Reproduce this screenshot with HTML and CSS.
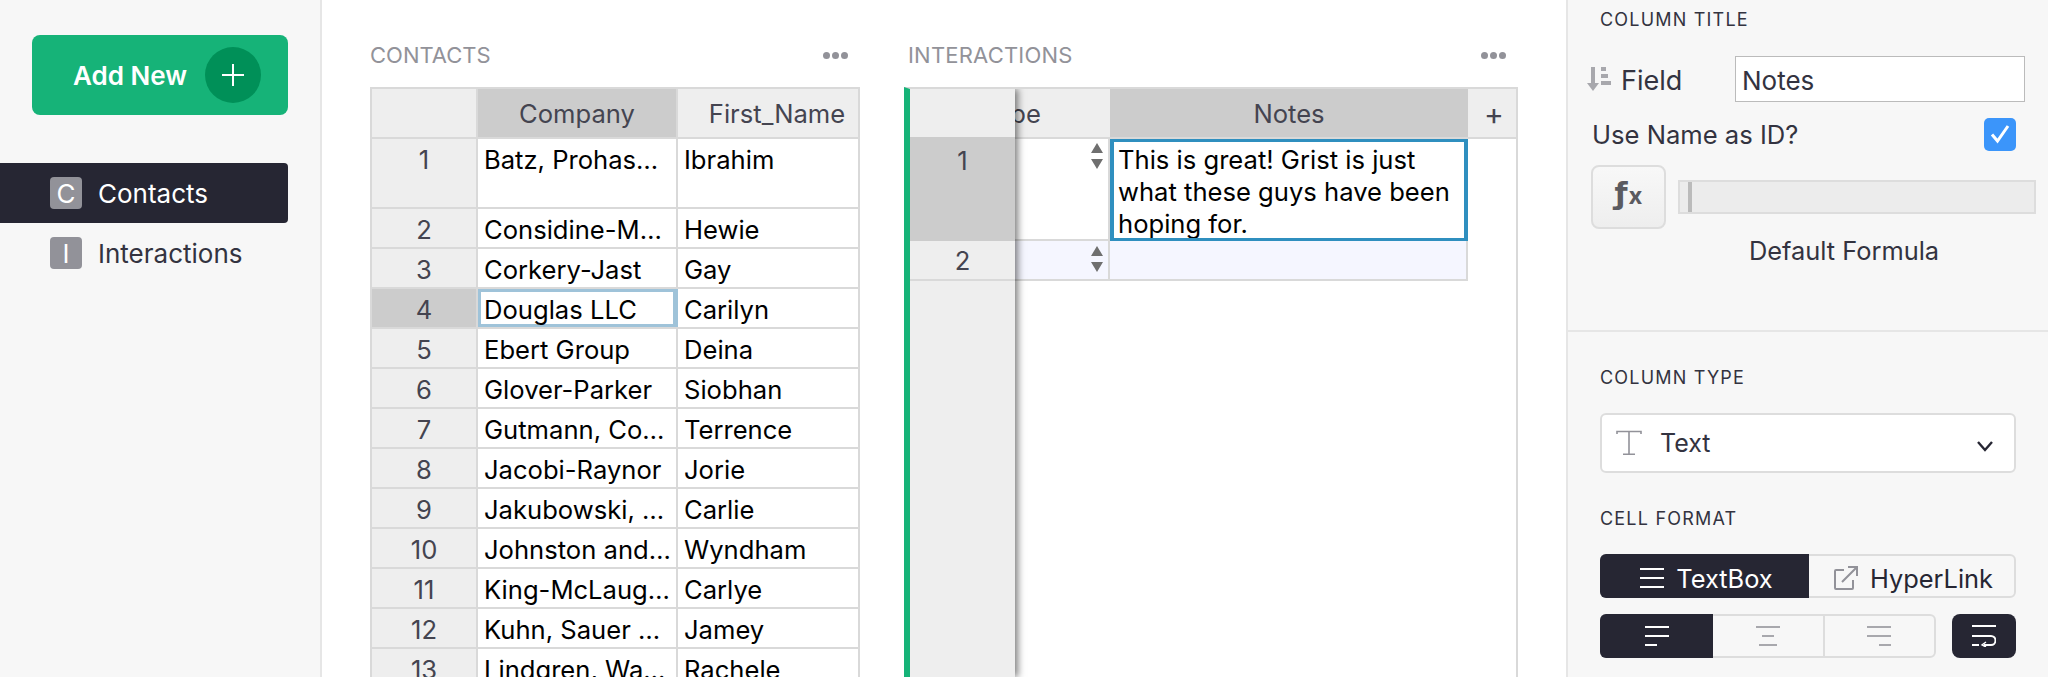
FILE: index.html
```html
<!DOCTYPE html>
<html lang="en">
<head>
    <meta charset="UTF-8">
    <meta name="viewport" content="width=device-width, initial-scale=1.0">
    <title>Grist</title>
    <link rel="stylesheet" href="styles.css">
</head>
<body>
    <div class="app">
        <!-- Left panel -->
        <aside class="left-panel">
            <button class="add-new">
                <span>Add New</span>
                <span class="add-circle">
                    <svg width="24" height="24" viewBox="0 0 24 24"><path d="M12 1v22M1 12h22" stroke="#fff" stroke-width="2" fill="none"/></svg>
                </span>
            </button>
            <ul class="page-list">
                <li class="page-item page-active"><span class="page-badge">C</span>Contacts</li>
                <li class="page-item"><span class="page-badge">I</span>Interactions</li>
            </ul>
        </aside>

        <!-- Widgets -->
        <main class="main">
            <section class="contacts">
                <div class="section-head">
                    <span class="section-title">CONTACTS</span>
                    <span class="dots"><i></i><i></i><i></i></span>
                </div>
                <div class="grid">
                    <div class="row row-head">
                        <div class="num"></div>
                        <div class="cell head-selected">Company</div>
                        <div class="cell head-first">First_Name</div>
                    </div>
                    <div class="row row-tall"><div class="num">1</div><div class="cell">Batz, Prohas…</div><div class="cell">Ibrahim</div></div>
                    <div class="row"><div class="num">2</div><div class="cell">Considine-M…</div><div class="cell">Hewie</div></div>
                    <div class="row"><div class="num">3</div><div class="cell">Corkery-Jast</div><div class="cell">Gay</div></div>
                    <div class="row"><div class="num num-selected">4</div><div class="cell cell-cursor">Douglas LLC</div><div class="cell">Carilyn</div></div>
                    <div class="row"><div class="num">5</div><div class="cell">Ebert Group</div><div class="cell">Deina</div></div>
                    <div class="row"><div class="num">6</div><div class="cell">Glover-Parker</div><div class="cell">Siobhan</div></div>
                    <div class="row"><div class="num">7</div><div class="cell">Gutmann, Co…</div><div class="cell">Terrence</div></div>
                    <div class="row"><div class="num">8</div><div class="cell">Jacobi-Raynor</div><div class="cell">Jorie</div></div>
                    <div class="row"><div class="num">9</div><div class="cell">Jakubowski, …</div><div class="cell">Carlie</div></div>
                    <div class="row"><div class="num">10</div><div class="cell">Johnston and…</div><div class="cell">Wyndham</div></div>
                    <div class="row"><div class="num">11</div><div class="cell">King-McLaug…</div><div class="cell">Carlye</div></div>
                    <div class="row"><div class="num">12</div><div class="cell">Kuhn, Sauer …</div><div class="cell">Jamey</div></div>
                    <div class="row"><div class="num">13</div><div class="cell">Lindgren, Wa…</div><div class="cell">Rachele</div></div>
                </div>
            </section>

            <section class="interactions">
                <div class="section-head">
                    <span class="section-title">INTERACTIONS</span>
                    <span class="dots"><i></i><i></i><i></i></span>
                </div>
                <div class="int-grid">
                    <div class="frozen">
                        <div class="frozen-head"></div>
                        <div class="frozen-one">1</div>
                        <div class="frozen-two">2</div>
                    </div>
                    <div class="scroller">
                        <div class="int-row int-head">
                            <div class="cell type-head">Type</div>
                            <div class="cell head-selected">Notes</div>
                            <div class="cell add-col">+</div>
                        </div>
                        <div class="int-row int-one">
                            <div class="cell type-cell">
                                <span class="spinner"><i class="up"></i><i class="down"></i></span>
                            </div>
                            <div class="cell notes-cursor">This is great! Grist is just what these guys have been hoping for.</div>
                        </div>
                        <div class="int-row int-two">
                            <div class="cell type-cell">
                                <span class="spinner"><i class="up"></i><i class="down"></i></span>
                            </div>
                            <div class="cell"></div>
                        </div>
                    </div>
                </div>
            </section>
        </main>

        <!-- Right panel -->
        <aside class="right-panel">
            <div class="panel-top">
                <div class="label label-first">COLUMN TITLE</div>
                <div class="field-row">
                    <svg class="sort-icon" width="24" height="24" viewBox="0 0 24 24" fill="#a8a8ad">
                        <path d="M4 0h4v16h4l-6 8-6-8h4z"/>
                        <rect x="14" y="0" width="5" height="4"/>
                        <rect x="14" y="7" width="7" height="4"/>
                        <rect x="14" y="14" width="10" height="4"/>
                    </svg>
                    <span class="field-label">Field</span>
                    <div class="field-input">Notes</div>
                </div>
                <div class="id-row">
                    <span>Use Name as ID?</span>
                    <span class="checkbox">
                        <svg width="22" height="22" viewBox="0 0 22 22"><path d="M3 11.5l5.5 6.5L19 3" stroke="#fff" stroke-width="3" fill="none"/></svg>
                    </span>
                </div>
                <div class="formula-row">
                    <div class="fx-btn"><span class="fx-f">ƒ</span><span class="fx-x">x</span></div>
                    <div class="formula-box"><i></i></div>
                </div>
                <div class="formula-caption">Default Formula</div>
            </div>

            <div class="panel-bottom">
                <div class="label">COLUMN TYPE</div>
                <div class="type-select">
                    <svg width="26" height="26" viewBox="0 0 26 26" fill="none" stroke="#929299" stroke-width="1.6">
                        <path d="M1 4V1.500h24V4M13 1.500v22M7 24.200h12"/>
                    </svg>
                    <span class="type-name">Text</span>
                    <svg class="chevron" width="18" height="12" viewBox="0 0 18 12" fill="none" stroke="#262633" stroke-width="2.4">
                        <path d="M2 2l7 8 7-8"/>
                    </svg>
                </div>
                <div class="label label-format">CELL FORMAT</div>
                <div class="btn-group format-group">
                    <div class="btn btn-dark">
                        <svg width="24" height="20" viewBox="0 0 24 20" stroke="#fff" stroke-width="2"><path d="M0 1h24M0 10h24M0 19h24"/></svg>
                        TextBox
                    </div>
                    <div class="btn">
                        <svg width="24" height="24" viewBox="0 0 24 24" fill="none" stroke="#929299" stroke-width="2">
                            <path d="M10 4H2a1 1 0 0 0-1 1v17a1 1 0 0 0 1 1h16a1 1 0 0 0 1-1v-8M8 16L23 1M14 1h9v9"/>
                        </svg>
                        HyperLink
                    </div>
                </div>
                <div class="align-row">
                    <div class="btn-group align-group">
                        <div class="btn btn-dark">
                            <svg width="24" height="20" viewBox="0 0 24 20" stroke="#fff" stroke-width="2"><path d="M0 1h24M0 10h24M0 19h12"/></svg>
                        </div>
                        <div class="btn">
                            <svg width="24" height="20" viewBox="0 0 24 20" stroke="#a8a8ad" stroke-width="2"><path d="M0 1h24M6 10h12M3 19h18"/></svg>
                        </div>
                        <div class="btn">
                            <svg width="24" height="20" viewBox="0 0 24 20" stroke="#a8a8ad" stroke-width="2"><path d="M0 1h24M0 10h24M12 19h12"/></svg>
                        </div>
                    </div>
                    <div class="wrap-btn">
                        <svg width="24" height="22" viewBox="0 0 24 22" fill="none" stroke="#fff" stroke-width="2">
                            <path d="M0 1h24M0 11h19a4 4 0 0 1 0 9h-7M0 20h7"/>
                            <path d="M14 17l-4 3 4 2" stroke-width="1.4"/>
                        </svg>
                    </div>
                </div>
            </div>
        </aside>
    </div>
</body>
</html>
```

FILE: styles.css
```css
* {
    box-sizing: border-box;
}
body {
    margin: 0;
    font-family: Inter, "Liberation Sans", sans-serif;
    color: #262633;
    background: #fff;
}
.app {
    display: flex;
    height: 677px;
    overflow: hidden;
}

/* Left panel */
.left-panel {
    width: 322px;
    flex: none;
    background: #f7f7f7;
    border-right: 2px solid #e6e6e6;
    padding-top: 35px;
}
.add-new {
    display: flex;
    align-items: center;
    width: 256px;
    height: 80px;
    margin-left: 32px;
    padding: 0 27px 0 41px;
    justify-content: space-between;
    background: #16b378;
    border: none;
    border-radius: 8px;
    color: #fff;
    font-family: inherit;
    font-size: 26px;
    font-weight: 600;
}
.add-circle {
    display: flex;
    align-items: center;
    justify-content: center;
    width: 56px;
    height: 56px;
    border-radius: 50%;
    background: #009058;
}
.page-list {
    list-style: none;
    margin: 48px 0 0;
    padding: 0;
    width: 288px;
}
.page-item {
    display: flex;
    align-items: center;
    height: 60px;
    padding-left: 50px;
    font-size: 26px;
    color: #333340;
}
.page-active {
    background: #262633;
    border-radius: 0 4px 4px 0;
    color: #fff;
}
.page-badge {
    display: flex;
    align-items: center;
    justify-content: center;
    width: 32px;
    height: 32px;
    margin-right: 16px;
    border-radius: 4px;
    background: #929299;
    color: #fff;
    font-size: 26px;
}

/* Widgets */
.main {
    flex: 1;
    display: flex;
    gap: 44px;
    padding-left: 48px;
    min-width: 0;
}
.contacts {
    width: 490px;
    flex: none;
}
.interactions {
    width: 614px;
    flex: none;
}
.section-head {
    display: flex;
    justify-content: space-between;
    align-items: center;
    height: 87px;
    padding: 22px 12px 0 0;
}
.dots {
    margin-top: 2px;
}
.interactions .section-head {
    padding-left: 4px;
}
.section-title {
    font-size: 22px;
    color: #929299;
}
.interactions .section-title {
    letter-spacing: 0.2px;
}
.dots {
    display: flex;
    gap: 2px;
}
.dots i {
    width: 7px;
    height: 7px;
    border-radius: 50%;
    background: #929299;
}

.grid {
    border: 2px solid #d9d9d9;
    border-bottom: none;
    font-size: 25.6px;
}
.row {
    display: grid;
    grid-template-columns: 106px 200px 1fr;
    height: 40px;
    border-bottom: 2px solid #d9d9d9;
    line-height: 32px;
    color: #000;
}
.row-head {
    height: 50px;
    text-align: center;
    line-height: 50px;
    color: #444450;
}
.row-head .cell {
    background: #eee;
    padding: 0;
}
.row-head .head-selected {
    background: #ccc;
}
.row-head .head-first {
    padding-left: 18px;
}
.row-tall {
    height: 70px;
}
.num {
    background: #eee;
    border-right: 2px solid #d9d9d9;
    text-align: center;
    color: #444450;
    padding-top: 5px;
}
.row-head .num {
    padding-top: 0;
}
.num-selected {
    background: #ccc;
}
.cell {
    padding: 5px 6px 0;
    border-right: 2px solid #d9d9d9;
    white-space: nowrap;
    overflow: hidden;
}
.row .cell:last-child {
    border-right: none;
}
.cell-cursor {
    box-shadow: inset 0 0 0 3px #9fc3d9;
    border-right-color: #9fc3d9;
}

/* Interactions grid, with the row numbers frozen over the scrolled columns */
.int-grid {
    display: flex;
    height: 590px;
    border-top: 2px solid #d9d9d9;
    border-right: 2px solid #d9d9d9;
    border-left: 6px solid #16b378;
    font-size: 25.6px;
    overflow: hidden;
}
.frozen {
    position: relative;
    z-index: 1;
    width: 105px;
    flex: none;
    background: #eee;
    box-shadow: 3px 0 7px rgba(0, 0, 0, 0.5);
    text-align: center;
    color: #444450;
}
.frozen-head {
    height: 48px;
}
.frozen-one {
    height: 104px;
    padding-top: 8px;
    line-height: 32px;
    background: #ccc;
}
.frozen-two {
    height: 40px;
    padding-top: 4px;
    line-height: 32px;
    border-bottom: 2px solid #d9d9d9;
}
.scroller {
    flex: 1;
    min-width: 0;
    overflow: hidden;
}
.int-row {
    display: grid;
    grid-template-columns: 198px 358px 48px;
    margin-left: -103px;
    line-height: 32px;
    color: #000;
}
.int-head {
    height: 50px;
    line-height: 50px;
    text-align: center;
    color: #444450;
}
.int-head .cell {
    padding: 0;
    background: #eee;
    border-bottom: 2px solid #d9d9d9;
    border-right: none;
}
.int-head .head-selected {
    background: #ccc;
}
.int-head .add-col {
    font-size: 30px;
    line-height: 50px;
    padding-left: 4px;
}
.int-one {
    height: 102px;
}
.int-two {
    height: 40px;
}
.int-two .cell {
    background: #f5f6ff;
}
.int-two .cell,
.type-cell {
    border-bottom: 2px solid #d9d9d9;
}
.type-cell {
    display: flex;
    justify-content: flex-end;
    padding: 4px 5px 0 0;
}
.int-two .type-cell {
    padding-top: 5px;
}
.spinner {
    display: flex;
    flex-direction: column;
    gap: 6px;
}
.spinner i {
    width: 0;
    height: 0;
    border-left: 6px solid transparent;
    border-right: 6px solid transparent;
}
.spinner .up {
    border-bottom: 10px solid #6f6f6f;
}
.spinner .down {
    border-top: 10px solid #6f6f6f;
}
.notes-cursor {
    border: 3px solid #2f8fbf;
    border-width: 3px 4px;
    padding: 2px 0 0 4px;
    white-space: normal;
    background: #fff;
}

/* Right panel */
.right-panel {
    width: 482px;
    flex: none;
    background: #f7f7f7;
    border-left: 2px solid #e6e6e6;
    color: #333340;
}
.panel-top {
    height: 332px;
    border-bottom: 2px solid #e6e6e6;
    padding-top: 9px;
}
.label {
    margin-left: 32px;
    font-size: 18px;
    line-height: 22px;
    letter-spacing: 1.2px;
}
.field-row {
    display: flex;
    align-items: center;
    height: 46px;
    margin-top: 25px;
    padding-left: 19px;
}
.sort-icon {
    flex: none;
}
.field-label {
    margin-left: 10px;
    width: 114px;
    padding-top: 2px;
    font-size: 27px;
}
.field-input {
    width: 290px;
    height: 46px;
    padding-left: 6px;
    background: #fff;
    border: 1px solid #bbb;
    font-size: 26px;
    line-height: 47px;
}
.id-row {
    display: flex;
    justify-content: space-between;
    align-items: center;
    height: 34px;
    margin-top: 15px;
    padding: 0 32px 0 24px;
    font-size: 25.6px;
}
.checkbox {
    display: flex;
    align-items: center;
    justify-content: center;
    width: 32px;
    height: 33px;
    background: #3b95fa;
    border-radius: 5px;
}
.formula-row {
    display: flex;
    align-items: center;
    margin-top: 14px;
    padding-left: 23px;
}
.fx-btn {
    display: flex;
    align-items: baseline;
    justify-content: center;
    width: 75px;
    height: 64px;
    padding-top: 9px;
    border: 2px solid #ddd;
    border-radius: 8px;
    background: linear-gradient(#f8f8f8, #eee);
    color: #5a5a60;
    font-weight: 700;
}
.fx-f {
    font-family: "DejaVu Sans", sans-serif;
    font-size: 30px;
}
.fx-x {
    margin-left: 1px;
    font-size: 24px;
}
.formula-box {
    width: 358px;
    height: 34px;
    margin-left: 12px;
    padding-left: 8px;
    background: #ececec;
    border: 2px solid #ddd;
}
.formula-box i {
    display: block;
    width: 4px;
    height: 30px;
    background: #bbb;
}
.formula-caption {
    margin-top: 6px;
    padding-left: 72px;
    text-align: center;
    font-size: 25.4px;
    line-height: 32px;
}
.panel-bottom {
    padding-top: 35px;
}
.type-select {
    display: flex;
    align-items: center;
    width: 416px;
    height: 60px;
    margin: 24px 0 0 32px;
    padding: 0 20px 0 14px;
    background: #fff;
    border: 2px solid #ddd;
    border-radius: 6px;
    font-size: 25px;
}
.type-name {
    margin-left: 18px;
    flex: 1;
}
.chevron {
    margin-top: 6px;
}
.label-format {
    margin-top: 35px;
}
.btn-group {
    display: flex;
    border: 2px solid #ddd;
    border-radius: 6px;
}
.format-group {
    width: 416px;
    height: 44px;
    margin: 24px 0 0 32px;
    font-size: 25.4px;
}
.format-group .btn {
    padding: 4px 0 0 4px;
}
.btn {
    flex: 1;
    display: flex;
    align-items: center;
    justify-content: center;
    gap: 12px;
    color: #262633;
}
.btn-dark {
    margin: -2px 0 -2px -2px;
    background: #262633;
    border-radius: 6px 0 0 6px;
    color: #fff;
}
.format-group .btn-dark {
    flex: none;
    width: 209px;
}
.align-row {
    display: flex;
    gap: 16px;
    margin: 16px 0 0 32px;
}
.align-group {
    width: 336px;
    height: 44px;
}
.align-group .btn-dark {
    flex: none;
    width: 113px;
}
.align-group .btn + .btn + .btn {
    border-left: 2px solid #ddd;
}
.wrap-btn {
    display: flex;
    align-items: center;
    justify-content: center;
    width: 64px;
    height: 44px;
    background: #262633;
    border-radius: 8px;
}
```
